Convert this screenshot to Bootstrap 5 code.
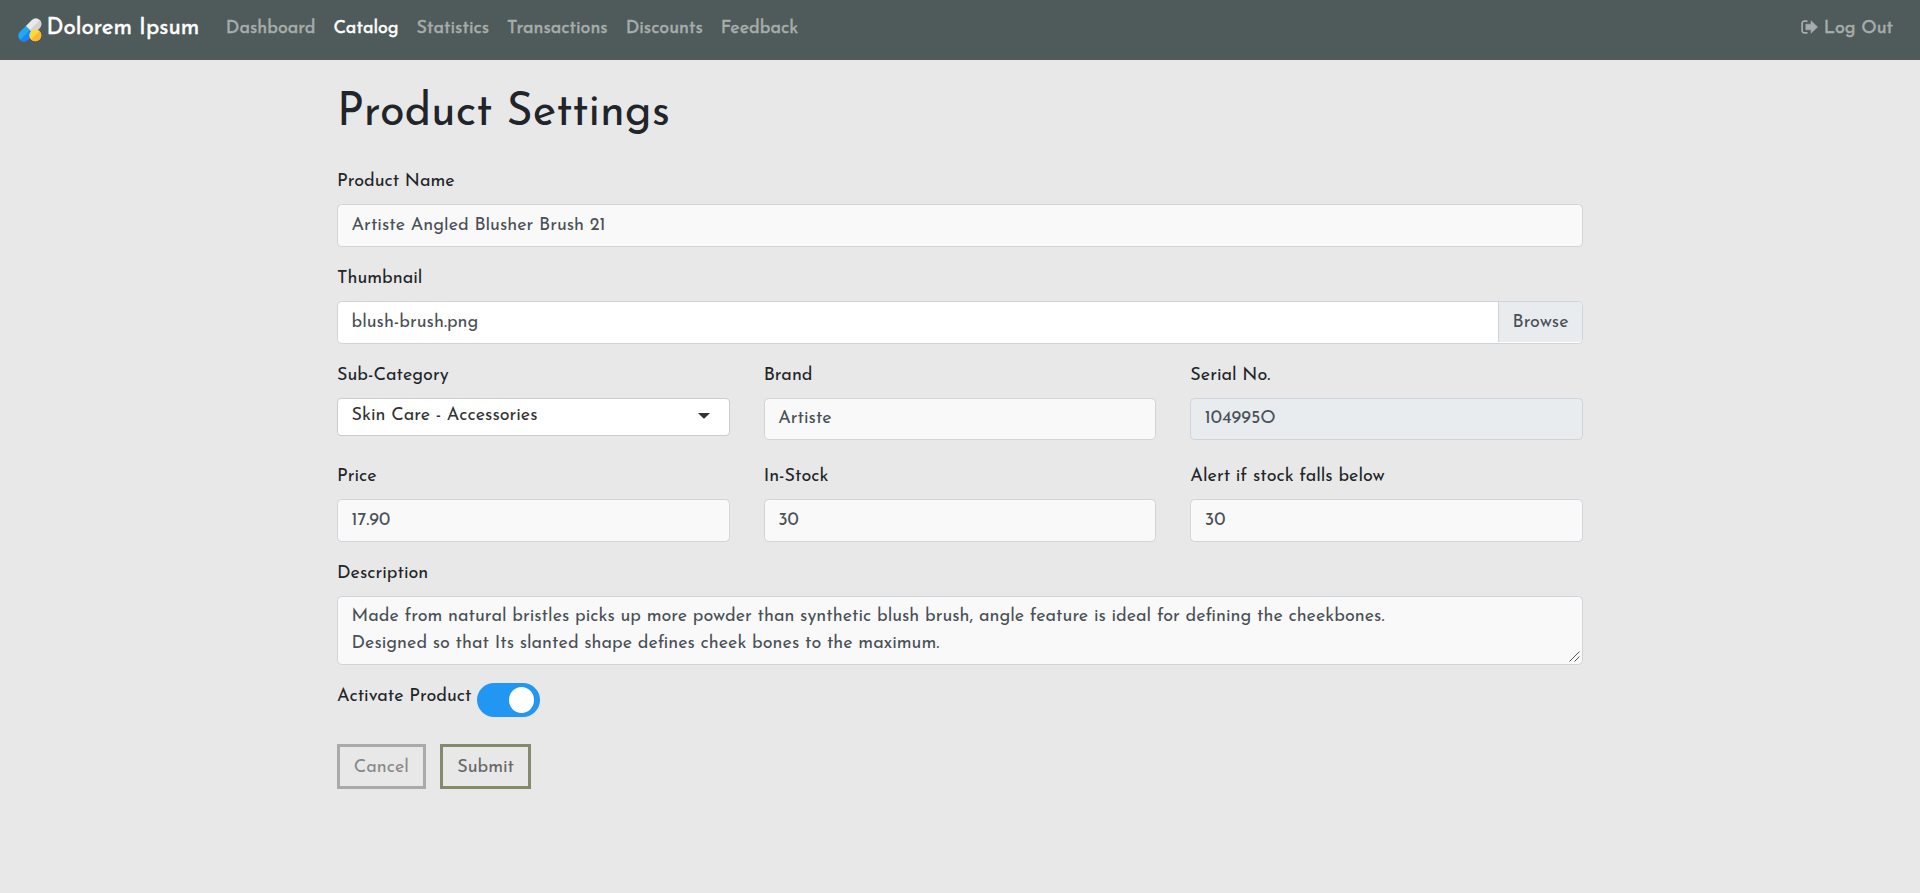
<!DOCTYPE html>
<html lang="en">
<head>
<meta charset="utf-8">
<meta name="viewport" content="width=device-width, initial-scale=1">
<title>Product Settings</title>
<link href="https://cdn.jsdelivr.net/npm/bootstrap@5.3.0/dist/css/bootstrap.min.css" rel="stylesheet">
<style>
  html { font-size: 18px; }
  body { background: #e8e8e8; color: #212529; font: 400 1rem/1.5 "Josefin Sans", Lato, sans-serif; }
  .topbar { background: #4f5b5a; height: 60px; padding: 0 27px 3px 18px; }
  .topbar .navbar-brand { font-size: 22.5px; line-height: 27px; margin: 0 17.5px 0 0; padding: 0; color: #fff; -webkit-text-stroke: .4px; }
  .topbar .nav-link { padding: 1.5px .5rem 0; color: #a7adac; white-space: nowrap; -webkit-text-stroke: .4px; }
  .topbar .nav-link.active { color: #fff; }
  .topbar .logout { padding: 1.5px 0 0; }
  .pills { width: 24px; height: 24px; margin-right: 4.5px; position: relative; top: 1px; }
  .page-wrap { width: 1246px; margin-left: 337px; padding-top: 27px; }
  .page-title { font-size: 45px; line-height: 54px; font-weight: 400; margin: 0 0 27px; }
  .form-label { display: block; margin: 0; padding: 1px 0 8px; }
  .field { margin-bottom: 1rem; }
  .form-control, .form-control:disabled { font: inherit; height: 43px; padding: 7.5px .75rem 6.5px; border: 1px solid #ced4da; border-radius: 4.5px; background: #f9f9f9; color: #495057; }
  .form-control:disabled { background: #e9ecef; }
  .thirds .form-control.short { height: 42px; padding: 6.3px .75rem 5.7px; }
  textarea.form-control { display: block; height: 69px; padding-top: 6.5px; padding-bottom: 4px; min-height: 0; overflow: hidden; resize: none; }
  .grip { position: absolute; right: 3px; bottom: 3px; }
  .file-box { display: flex; justify-content: space-between; background: #fff; padding: 0; overflow: hidden; }
  .file-box > span { padding: 8px .75rem 5px; }
  .file-box .browse { background: #e9ecef; border-left: 1px solid #ced4da; height: 40px; border-radius: 0 4px 4px 0; }
  .picker { display: flex; align-items: center; justify-content: space-between; height: 38px; background: #fff; border: 1px solid #ccc; border-radius: 4px; padding: 0 19px 1px 13.5px; color: #333; }
  .picker svg { margin-top: -1px; }
  .thirds { display: grid; grid-template-columns: repeat(3, 1fr); column-gap: 34px; }
  .thirds + .thirds { margin-top: 23px; }
  .toggle { width: 63px; height: 34px; border-radius: 17px; background: #2196f3; padding: 4px 6px 4px 0; margin-left: 5.5px; }
  .toggle i { width: 25px; height: 26px; border-radius: 50%; background: #fff; }
  .toggle-label { padding-top: 1px; }
  .actions { margin-top: 27px; gap: 14.5px; }
  .box-btn { height: 45px; border: 3px solid #aaa; background: transparent; color: #888; padding: 7.5px 13.7px 4px; line-height: 27px; }
  .box-btn.go { border-color: #858a6b; color: #666; padding-left: 14.2px; padding-right: 14.2px; }
</style>
</head>
<body>
<nav class="topbar d-flex align-items-center">
  <a class="navbar-brand d-flex align-items-center" href="#">
    <svg class="pills" viewBox="0 0 24 24" aria-hidden="true">
      <g transform="rotate(-45 12 12)">
        <path d="M12 6.2H3.6a5.6 5.6 0 0 0 0 11.2H12z" fill="#1eaaf1"/>
        <path d="M12 12H-2a5.6 5.6 0 0 0 5.6 5.4H12z" fill="#1a83ff"/>
        <path d="M12 6.2h8.4a5.6 5.6 0 0 1 0 11.2H12z" fill="#e9e9ea"/>
        <path d="M12 12h14a5.6 5.6 0 0 1-5.6 5.4H12z" fill="#d3d3d5"/>
      </g>
      <circle cx="17.3" cy="17.3" r="6" fill="#ffd83b"/>
      <path d="M21.54 13.06a6 6 0 0 1-8.48 8.48z" fill="#ffb82e"/>
    </svg>
    <span>Dolorem Ipsum</span>
  </a>
  <div class="nav flex-nowrap flex-grow-1">
    <a class="nav-link" href="#">Dashboard</a>
    <a class="nav-link active" href="#">Catalog</a>
    <a class="nav-link" href="#">Statistics</a>
    <a class="nav-link" href="#">Transactions</a>
    <a class="nav-link" href="#">Discounts</a>
    <a class="nav-link" href="#">Feedback</a>
  </div>
  <a class="nav-link logout d-flex align-items-center" href="#">
    <svg width="17" height="14" viewBox="0 0 17 14" fill="none" style="margin:-5px 6px 0 0" aria-hidden="true">
      <path d="M6.5 1.1H3.4A2.3 2.3 0 0 0 1.1 3.4v7.2a2.3 2.3 0 0 0 2.3 2.3h3.1" stroke="currentColor" stroke-width="1.7"/>
      <path d="M10 .7 16.6 7 10 13.3V9.8H4.8V4.2H10z" fill="currentColor" stroke="currentColor" stroke-width=".5" stroke-linejoin="round"/>
    </svg>
    <span>Log Out</span>
  </a>
</nav>

<main class="page-wrap">
  <h1 class="page-title">Product Settings</h1>
  <form>
    <div class="field">
      <label class="form-label">Product Name</label>
      <input class="form-control" type="text" value="Artiste Angled Blusher Brush 21">
    </div>
    <div class="field">
      <label class="form-label">Thumbnail</label>
      <div class="form-control file-box"><span>blush-brush.png</span><span class="browse">Browse</span></div>
    </div>
    <div class="thirds">
      <div>
        <label class="form-label">Sub-Category</label>
        <div class="picker"><span>Skin Care - Accessories</span>
          <svg width="12" height="6" viewBox="0 0 12 6" aria-hidden="true"><path d="M0 0h12L6.7 5.2q-.7.6-1.4 0z" fill="#333"/></svg>
        </div>
      </div>
      <div>
        <label class="form-label">Brand</label>
        <input class="form-control short" type="text" value="Artiste">
      </div>
      <div>
        <label class="form-label">Serial No.</label>
        <input class="form-control short" type="text" value="104995O" disabled>
      </div>
    </div>
    <div class="thirds field">
      <div>
        <label class="form-label">Price</label>
        <input class="form-control" type="text" value="17.90">
      </div>
      <div>
        <label class="form-label">In-Stock</label>
        <input class="form-control" type="text" value="30">
      </div>
      <div>
        <label class="form-label">Alert if stock falls below</label>
        <input class="form-control" type="text" value="30">
      </div>
    </div>
    <div class="field">
      <label class="form-label">Description</label>
      <div class="position-relative">
        <textarea class="form-control">Made from natural bristles picks up more powder than synthetic blush brush, angle feature is ideal for defining the cheekbones.
Designed so that Its slanted shape defines cheek bones to the maximum.</textarea>
        <svg class="grip" width="11" height="11" viewBox="0 0 11 11" stroke="#555" stroke-width="1" aria-hidden="true"><path d="M.5 10.5l10-10M5.5 10.5l5-5"/></svg>
      </div>
    </div>
    <div class="d-flex align-items-start">
      <span class="toggle-label">Activate Product</span>
      <span class="toggle d-flex justify-content-end"><i></i></span>
    </div>
    <div class="actions d-flex">
      <button type="button" class="box-btn">Cancel</button>
      <button type="button" class="box-btn go">Submit</button>
    </div>
  </form>
</main>
<script src="https://cdn.jsdelivr.net/npm/bootstrap@5.3.0/dist/js/bootstrap.bundle.min.js"></script>
</body>
</html>
